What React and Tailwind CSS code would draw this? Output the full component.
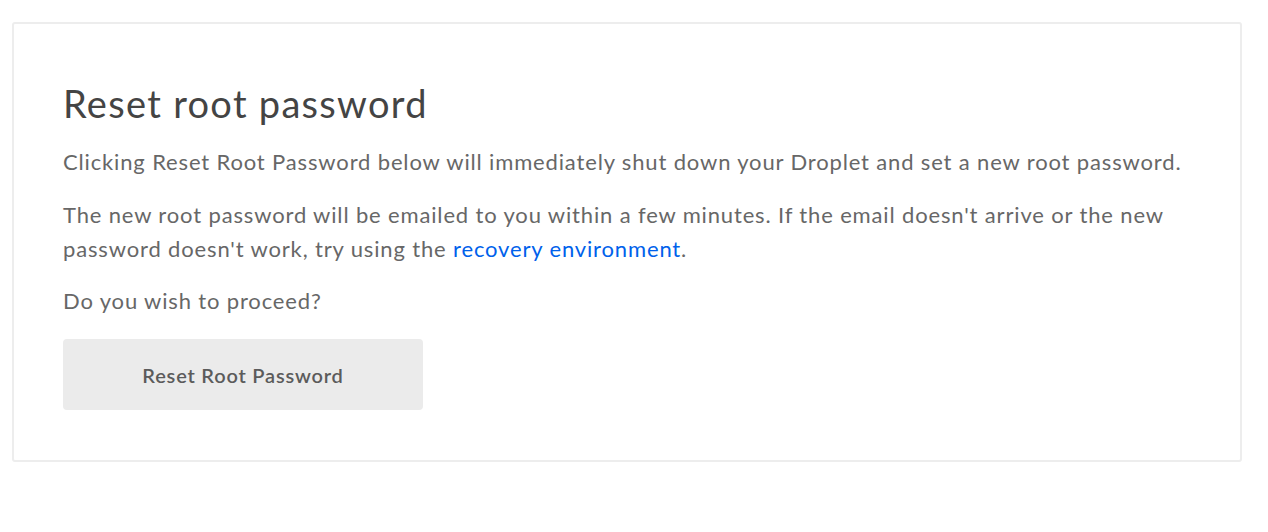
export default function App() {
  return (
    <div className="min-h-[532px] bg-white pt-[22px] pl-[12px] pr-[26px]" style={{ fontFamily: 'Lato, "Open Sans", sans-serif' }}>
      <div className="h-[440px] rounded-[3px] border-2 border-[#ededed] bg-white px-[49px] pt-[55px]">
        <h1 className="text-[38px] leading-[48px] tracking-[1.3px] font-normal text-[#444444]">Reset root password</h1>
        <p className="mt-[18px] whitespace-nowrap text-[22px] leading-[34px] tracking-[0.85px] text-[#676767]">
          Clicking Reset Root Password below will immediately shut down your Droplet and set a new root password.
        </p>
        <p className="mt-[19px] max-w-[1130px] text-[22px] leading-[34px] tracking-[0.85px] text-[#676767]">
          The new root password will be emailed to you within a few minutes. If the email doesn't arrive or the new password doesn't work, try using the{' '}
          <a href="#" className="text-[#0061eb]">recovery environment</a>.
        </p>
        <p className="mt-[18px] text-[22px] leading-[34px] tracking-[0.85px] text-[#676767]">Do you wish to proceed?</p>
        <button className="mt-[21px] h-[71px] w-[360px] rounded-[4px] bg-[#ebebeb] text-[20px] font-semibold tracking-[0.8px] text-[#5b5b5b]">
          Reset Root Password
        </button>
      </div>
    </div>
  )
}
